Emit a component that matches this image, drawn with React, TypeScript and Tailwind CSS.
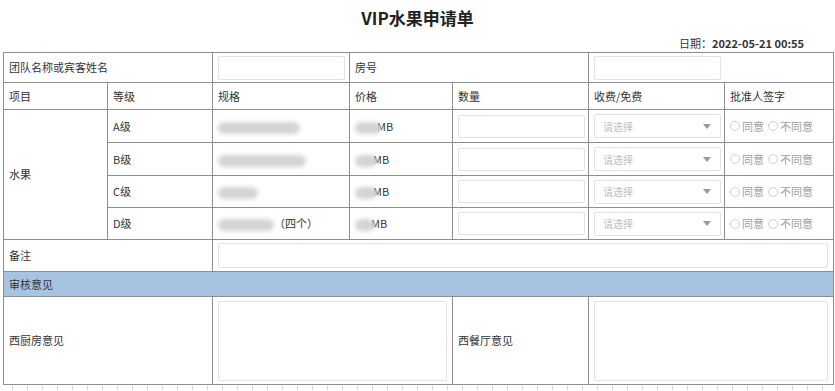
import React from "react";

// widths of the seven table columns, left to right
const cols = [104, 105, 137, 103, 136, 136, 109];

const grades = [
  { grade: "A级", spec: 82, tail: "", price: 26 },
  { grade: "B级", spec: 88, tail: "", price: 22 },
  { grade: "C级", spec: 40, tail: "", price: 22 },
  { grade: "D级", spec: 56, tail: "（四个）", price: 20 },
];

const cell = "border border-[#8e8e8e] px-[5px] text-[11px] text-[#333] align-middle";

const Blur = ({ w }: { w: number }) => (
  <span
    className="inline-block h-[12px] rounded-full bg-[#d4d4d4] blur-[2px] align-middle"
    style={{ width: w }}
  />
);

const Radio = ({ label }: { label: string }) => (
  <span className="inline-flex items-center gap-[2px] text-[11px] text-[#a0a0a0]">
    <span className="inline-block h-[10px] w-[10px] rounded-full border border-[#d0d0d0] bg-white" />
    {label}
  </span>
);

const Field = ({ className = "" }: { className?: string }) => (
  <div className={"rounded-[2px] border border-[#e2e2e2] bg-white " + className} />
);

const Select = () => (
  <div className="flex h-[24px] w-[127px] items-center justify-between rounded-[2px] border border-[#e2e2e2] bg-white pl-[8px] pr-[9px]">
    <span className="text-[10px] text-[#bdbdbd]">请选择</span>
    <svg width="8" height="5" viewBox="0 0 8 5">
      <path d="M0 0h8L4 5z" fill="#9a9a9a" />
    </svg>
  </div>
);

export default function App() {
  return (
    <div className="h-[391px] w-[835px] overflow-hidden bg-white font-['Noto_Sans_CJK_SC','Noto_Sans',sans-serif]">
      <div className="flex h-[34px] items-center justify-center pt-[2px] text-[17px] font-bold text-[#222]">
        VIP水果申请单
      </div>
      <div className="flex h-[18px] items-center justify-end pr-[31px] text-[11px] text-[#333]">
        日期：<span className="font-bold">2022-05-21 00:55</span>
      </div>

      <table className="ml-[3px] w-[830px] table-fixed border-collapse">
        <colgroup>
          {cols.map((w, i) => (
            <col key={i} style={{ width: w }} />
          ))}
        </colgroup>
        <tbody>
          <tr className="h-[30px]">
            <td colSpan={2} className={cell}>团队名称或宾客姓名</td>
            <td className={cell}>
              <Field className="h-[24px] w-[127px]" />
            </td>
            <td colSpan={2} className={cell}>房号</td>
            <td colSpan={2} className={cell}>
              <Field className="h-[24px] w-[127px]" />
            </td>
          </tr>
          <tr className="h-[27px]">
            <td className={cell}>项目</td>
            <td className={cell}>等级</td>
            <td className={cell}>规格</td>
            <td className={cell}>价格</td>
            <td className={cell}>数量</td>
            <td className={cell}>收费/免费</td>
            <td className={cell}>批准人签字</td>
          </tr>
          {grades.map((g, i) => (
            <tr key={g.grade} className={i === 2 || i === 3 ? "h-[32px]" : "h-[33px]"}>
              {i === 0 && (
                <td rowSpan={4} className={cell}>水果</td>
              )}
              <td className={cell}>{g.grade}</td>
              <td className={cell}>
                <Blur w={g.spec} />
                {g.tail}
              </td>
              <td className={cell}>
                <Blur w={g.price} />
                <span className="-ml-[4px]">MB</span>
              </td>
              <td className={cell}>
                <Field className="h-[23px] w-[127px]" />
              </td>
              <td className={cell}>
                <Select />
              </td>
              <td className={cell + " whitespace-nowrap"}>
                <span className="flex items-center gap-[4px]">
                  <Radio label="同意" />
                  <Radio label="不同意" />
                </span>
              </td>
            </tr>
          ))}
          <tr className="h-[32px]">
            <td colSpan={2} className={cell}>备注</td>
            <td colSpan={5} className={cell}>
              <Field className="h-[25px] w-full" />
            </td>
          </tr>
          <tr className="h-[25px]">
            <td colSpan={7} className={cell + " bg-[#a6c4e2]"}>审核意见</td>
          </tr>
          <tr className="h-[88px]">
            <td colSpan={2} className={cell}>西厨房意见</td>
            <td colSpan={2} className={cell}>
              <Field className="h-[80px] w-full" />
            </td>
            <td className={cell}>西餐厅意见</td>
            <td colSpan={2} className={cell}>
              <Field className="h-[80px] w-full" />
            </td>
          </tr>
        </tbody>
      </table>

      <div className="ml-[12px] mt-[1px] h-[4px] w-[815px] bg-[repeating-linear-gradient(to_right,#d2d2d2_0_1px,transparent_1px_15px)]" />
    </div>
  );
}
